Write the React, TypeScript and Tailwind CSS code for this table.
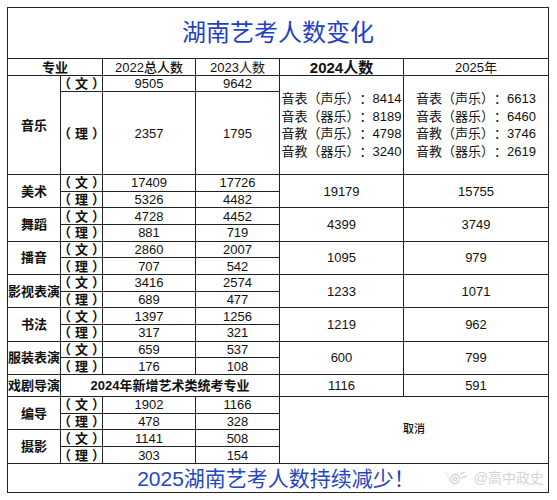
import React from "react";

const c = "bg-white flex items-center justify-center whitespace-nowrap";

const groups = [
  { name: "美术", w22: ["17409", "5326"], w23: ["17726", "4482"], y24: "19179", y25: "15755" },
  { name: "舞蹈", w22: ["4728", "881"], w23: ["4452", "719"], y24: "4399", y25: "3749" },
  { name: "播音", w22: ["2860", "707"], w23: ["2007", "542"], y24: "1095", y25: "979" },
  { name: "影视表演", w22: ["3416", "689"], w23: ["2574", "477"], y24: "1233", y25: "1071" },
  { name: "书法", w22: ["1397", "317"], w23: ["1256", "321"], y24: "1219", y25: "962" },
  { name: "服装表演", w22: ["659", "176"], w23: ["537", "108"], y24: "600", y25: "799" },
];

const music24 = ["音表（声乐）：8414", "音表（器乐）：8189", "音教（声乐）：4798", "音教（器乐）：3240"];
const music25 = ["音表（声乐）：6613", "音表（器乐）：6460", "音教（声乐）：3746", "音教（器乐）：2619"];

const Kind = ({ t }: { t: string }) => (
  <div className={`${c} font-bold tracking-[4px] pl-[4px]`}>（{t}）</div>
);

const MusicList = ({ lines }: { lines: string[] }) => (
  <div className={`${c} row-span-2`}>
    <div className="flex flex-col leading-[17.5px] text-left">
      {lines.map((l) => (
        <span key={l}>{l}</span>
      ))}
    </div>
  </div>
);

export default function App() {
  return (
    <div className="min-h-screen bg-white pt-[7px] pl-[7px]">
      <div className="w-[542px] grid grid-cols-[52px_41px_92px_83px_123px_144px] grid-rows-[50px_16px_15px_82px_repeat(12,15.67px)_21px_repeat(4,15.75px)_28px] gap-px bg-[#222] p-px font-['Liberation_Sans','Noto_Sans_CJK_SC',sans-serif] text-[13px] text-[#111] leading-none [text-spacing-trim:space-all]">
        {/* title */}
        <div className={`${c} col-span-6 text-[24px] text-[#1f40c6]`}>湖南艺考人数变化</div>

        {/* header */}
        <div className={`${c} col-span-2 font-bold`}>专业</div>
        <div className={`${c} font-medium`}>2022总人数</div>
        <div className={c}>2023人数</div>
        <div className={`${c} text-[15px] font-bold`}>2024人数</div>
        <div className={c}>2025年</div>

        {/* 音乐 */}
        <div className={`${c} row-span-2 font-bold`}>音乐</div>
        <Kind t="文" />
        <div className={c}>9505</div>
        <div className={c}>9642</div>
        <MusicList lines={music24} />
        <MusicList lines={music25} />
        <Kind t="理" />
        <div className={c}>2357</div>
        <div className={c}>1795</div>

        {groups.map((g) => (
          <React.Fragment key={g.name}>
            <div className={`${c} row-span-2 font-bold`}>{g.name}</div>
            <Kind t="文" />
            <div className={c}>{g.w22[0]}</div>
            <div className={c}>{g.w23[0]}</div>
            <div className={`${c} row-span-2`}>{g.y24}</div>
            <div className={`${c} row-span-2`}>{g.y25}</div>
            <Kind t="理" />
            <div className={c}>{g.w22[1]}</div>
            <div className={c}>{g.w23[1]}</div>
          </React.Fragment>
        ))}

        {/* 戏剧导演 */}
        <div className={`${c} font-bold`}>戏剧导演</div>
        <div className={`${c} col-span-3 font-bold`}>2024年新增艺术类统考专业</div>
        <div className={c}>1116</div>
        <div className={c}>591</div>

        {/* 编导 / 摄影 */}
        <div className={`${c} row-span-2 font-bold`}>编导</div>
        <Kind t="文" />
        <div className={c}>1902</div>
        <div className={c}>1166</div>
        <div className={`${c} col-span-2 row-span-4 text-[11px] font-medium`}>取消</div>
        <Kind t="理" />
        <div className={c}>478</div>
        <div className={c}>328</div>
        <div className={`${c} row-span-2 font-bold`}>摄影</div>
        <Kind t="文" />
        <div className={c}>1141</div>
        <div className={c}>508</div>
        <Kind t="理" />
        <div className={c}>303</div>
        <div className={c}>154</div>

        {/* banner */}
        <div className="relative col-span-6 bg-white flex items-center justify-center">
          <span className="text-[21px] text-[#2246c4] pt-[2px] pr-[4px]">2025湖南艺考人数持续减少！</span>
          <div className="absolute right-[4px] top-[6px] flex items-center gap-[3px] text-[14px] text-[#d4d4d4]">
            <svg width="22" height="16" viewBox="0 0 22 16" fill="none" stroke="#d6d6d6" strokeWidth="1.4">
              <circle cx="6" cy="9" r="4.5" />
              <circle cx="6" cy="9" r="1.8" />
              <path d="M11 4 L16 2 M12 8 L18 6" />
            </svg>
            <span>@高中政史</span>
          </div>
          <svg className="absolute left-[437px] top-[6px]" width="16" height="14" viewBox="0 0 16 14" fill="none" stroke="#dde6e6" strokeWidth="1">
            <path d="M1 2 L5 12 M7 9 L14 3" />
          </svg>
        </div>
      </div>
    </div>
  );
}
